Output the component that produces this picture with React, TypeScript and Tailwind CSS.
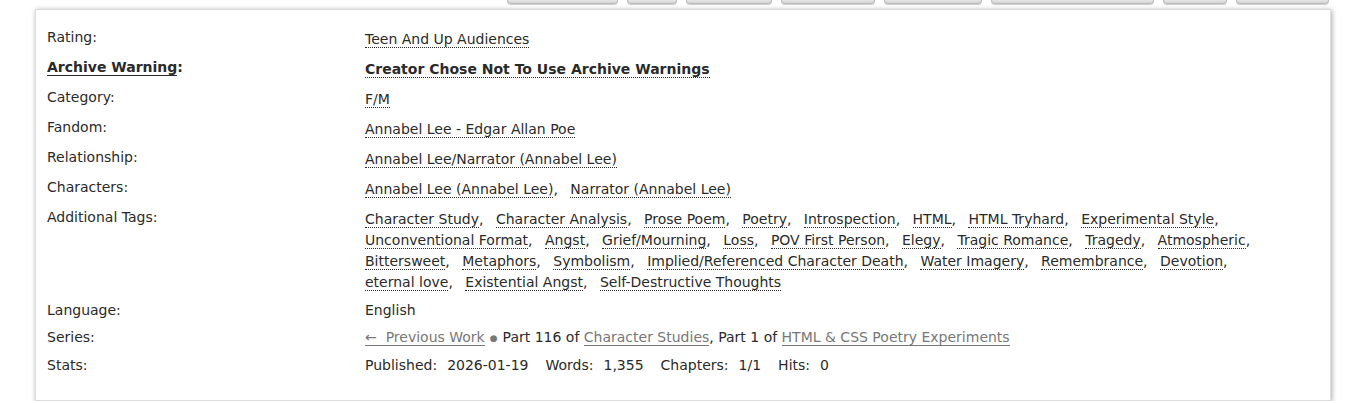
import React from "react";

const font = { fontFamily: '"DejaVu Sans", Verdana, sans-serif' };

const buttons = [
  "w-[111px]",
  "w-[50px]",
  "w-[86px]",
  "w-[94px]",
  "w-[98px]",
  "w-[163px]",
  "w-[64px]",
  "w-[93px]",
];

const tags = [
  "Character Study",
  "Character Analysis",
  "Prose Poem",
  "Poetry",
  "Introspection",
  "HTML",
  "HTML Tryhard",
  "Experimental Style",
  "Unconventional Format",
  "Angst",
  "Grief/Mourning",
  "Loss",
  "POV First Person",
  "Elegy",
  "Tragic Romance",
  "Tragedy",
  "Atmospheric",
  "Bittersweet",
  "Metaphors",
  "Symbolism",
  "Implied/Referenced Character Death",
  "Water Imagery",
  "Remembrance",
  "Devotion",
  "eternal love",
  "Existential Angst",
  "Self-Destructive Thoughts",
];

function Tag({ children, bold }: { children: React.ReactNode; bold?: boolean }) {
  return (
    <a
      href="#"
      className={`text-[#2a2a2a] border-b border-dotted border-[#2a2a2a] ${bold ? "font-bold" : ""}`}
    >
      {children}
    </a>
  );
}

function TagList({ items }: { items: string[] }) {
  return (
    <ul className="inline">
      {items.map((t, i) => (
        <React.Fragment key={t}>
          <li className="inline whitespace-nowrap">
            <Tag>{t}</Tag>
            {i < items.length - 1 && <span className="mr-[8px]">,</span>}
          </li>{" "}
        </React.Fragment>
      ))}
    </ul>
  );
}

function Row({
  label,
  children,
  tag = true,
  last,
}: {
  label: React.ReactNode;
  children: React.ReactNode;
  tag?: boolean;
  last?: boolean;
}) {
  return (
    <>
      <dt className={tag ? "mb-[9px]" : last ? "" : "mb-[6px]"}>{label}</dt>
      <dd className={tag ? "pt-[2px] mb-[7px]" : last ? "" : "mb-[6px]"}>{children}</dd>
    </>
  );
}

function GrayLink({ children }: { children: React.ReactNode }) {
  return (
    <a href="#" className="text-[#777] border-b border-[#777]">
      {children}
    </a>
  );
}

export default function App() {
  return (
    <div className="w-full bg-white text-[14px] leading-[21px] text-[#2a2a2a]" style={font}>
      {/* action buttons, only the bottoms show */}
      <div className="flex justify-end gap-[9px] pr-[37px]">
        {buttons.map((w, i) => (
          <div
            key={i}
            className={`${w} h-[4px] rounded-b-[4px] border-x border-b border-[#bbb] bg-gradient-to-b from-[#e6e6e6] to-[#d4d4d4] shadow-[0_1px_1px_#ccc]`}
          />
        ))}
      </div>

      <div className="mx-[35px] mt-[5px] border border-[#ddd] shadow-[1px_1px_5px_#aaa] pl-[11px] pr-[11px] pt-[17px] pb-[24px]">
        <dl className="grid grid-cols-[318px_minmax(0,1fr)]">
          <Row label="Rating:">
            <Tag>Teen And Up Audiences</Tag>
          </Row>
          <Row
            label={
              <span className="font-bold">
                <a href="#" className="border-b border-[#2a2a2a]">
                  Archive Warning
                </a>
                :
              </span>
            }
          >
            <Tag bold>Creator Chose Not To Use Archive Warnings</Tag>
          </Row>
          <Row label="Category:">
            <Tag>F/M</Tag>
          </Row>
          <Row label="Fandom:">
            <Tag>Annabel Lee - Edgar Allan Poe</Tag>
          </Row>
          <Row label="Relationship:">
            <Tag>Annabel Lee/Narrator (Annabel Lee)</Tag>
          </Row>
          <Row label="Characters:">
            <TagList items={["Annabel Lee (Annabel Lee)", "Narrator (Annabel Lee)"]} />
          </Row>
          <Row label="Additional Tags:">
            <TagList items={tags} />
          </Row>
          <Row label="Language:" tag={false}>
            English
          </Row>
          <Row label="Series:" tag={false}>
            <GrayLink>←&nbsp; Previous Work</GrayLink>
            <span className="text-[#777] mx-[5px] text-[9px] align-[1px]">●</span>
            Part 116 of <GrayLink>Character Studies</GrayLink>, Part 1 of{" "}
            <GrayLink>HTML &amp; CSS Poetry Experiments</GrayLink>
          </Row>
          <Row label="Stats:" tag={false} last>
            <div className="flex gap-[17px]">
              <span>
                Published:<span className="ml-[10px]">2026-01-19</span>
              </span>
              <span>
                Words:<span className="ml-[10px]">1,355</span>
              </span>
              <span>
                Chapters:<span className="ml-[10px]">1/1</span>
              </span>
              <span>
                Hits:<span className="ml-[10px]">0</span>
              </span>
            </div>
          </Row>
        </dl>
      </div>
    </div>
  );
}
